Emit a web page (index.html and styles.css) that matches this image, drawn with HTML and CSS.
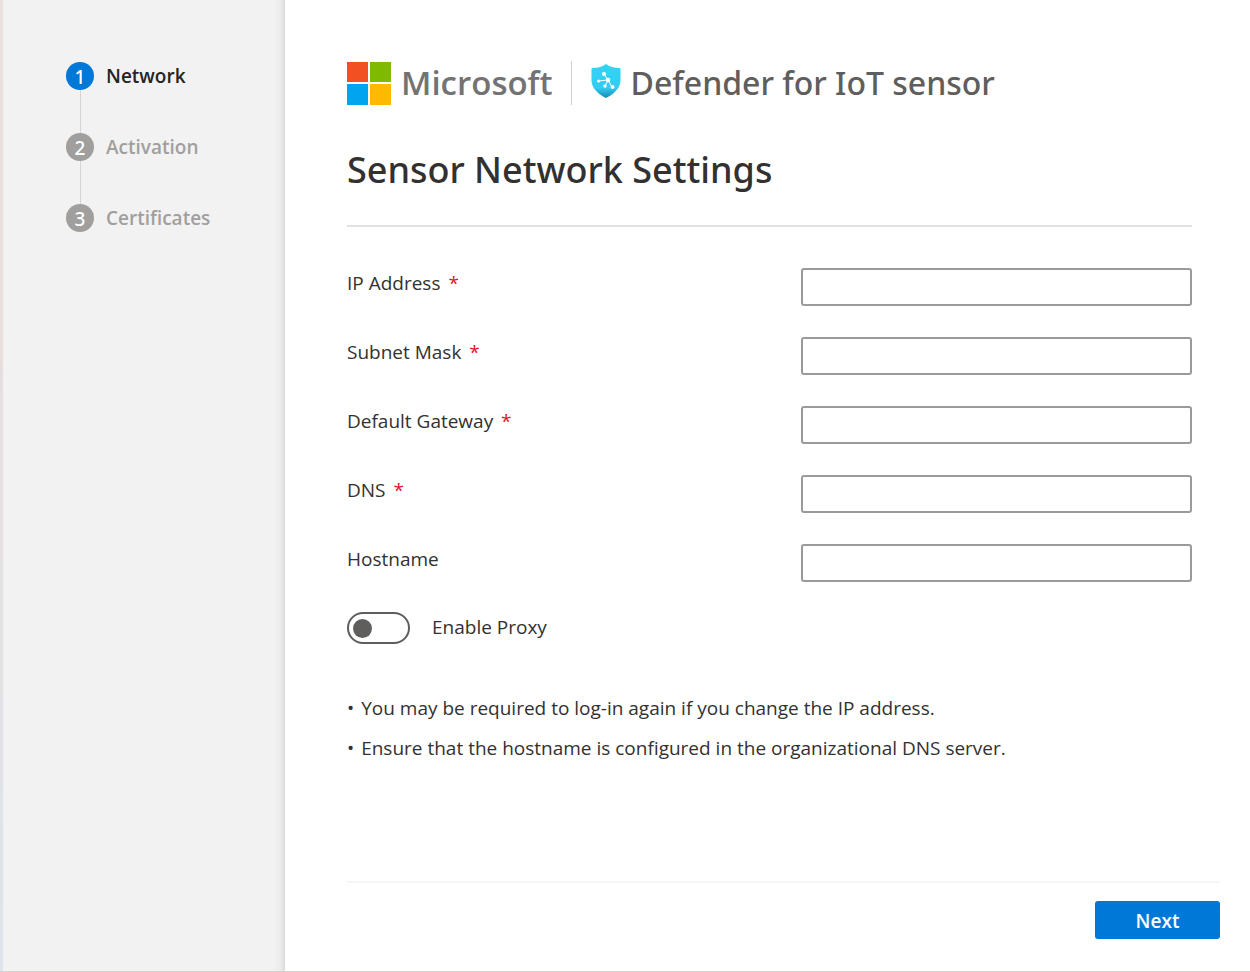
FILE: index.html
```html
<!DOCTYPE html>
<html lang="en">
<head>
<meta charset="utf-8">
<meta name="viewport" content="width=device-width, initial-scale=1">
<title>Defender for IoT sensor</title>
<link rel="stylesheet" href="styles.css">
</head>
<body>
<div class="wizard">
  <nav class="sidebar" aria-label="Setup steps">
    <ol class="steps">
      <li class="step step-active" aria-current="step"><span class="step-number">1</span><span class="step-name">Network</span></li>
      <li class="step"><span class="step-number">2</span><span class="step-name">Activation</span></li>
      <li class="step"><span class="step-number">3</span><span class="step-name">Certificates</span></li>
    </ol>
  </nav>
  <main class="main">
    <header class="brand">
      <svg class="brand-squares" viewBox="0 0 44 44" aria-hidden="true">
        <path fill="#f25022" d="M0 1h21v20H0z"/>
        <path fill="#7fba00" d="M23 1h21v20H23z"/>
        <path fill="#00a4ef" d="M0 23h21v21H0z"/>
        <path fill="#ffb900" d="M23 23h21v21H23z"/>
      </svg>
      <span class="brand-company">Microsoft</span>
      <span class="brand-divider"></span>
      <svg class="brand-shield" viewBox="0 0 30 36" aria-hidden="true">
        <defs>
          <linearGradient id="shield" x1="0" y1="0" x2="0" y2="1">
            <stop offset="0" stop-color="#32d4f5"/>
            <stop offset=".7" stop-color="#32cdf0"/>
            <stop offset="1" stop-color="#198ab3"/>
          </linearGradient>
        </defs>
        <path fill="url(#shield)" d="M15 1c3.500 2.800 8 4 13 4q1.500 0 1.500 1v11.500c0 8.500-8.500 14.500-14.500 17.500C9 32 .500 26 .500 17.500V6q0-1 1.500-1c5 0 9.500-1.200 13-4z"/>
        <path stroke="#fff" stroke-width="1" fill="none" d="M17 17 13 11M17 17 7 18M17 17l-3 6M17 17l4 7"/>
        <g fill="#fff"><circle cx="17" cy="17" r="2.300"/><circle cx="13" cy="11" r="2"/><circle cx="7.500" cy="18" r="1.500"/><circle cx="14" cy="23" r="1.700"/><circle cx="21.500" cy="24" r="2"/></g>
      </svg>
      <span class="brand-product">Defender for IoT sensor</span>
    </header>
    <form class="content">
      <h1 class="title">Sensor Network Settings</h1>
      <div class="fields">
        <div class="field"><label for="ip">IP Address <span class="required">*</span></label><input class="text-box" id="ip" type="text" required></div>
        <div class="field"><label for="mask">Subnet Mask <span class="required">*</span></label><input class="text-box" id="mask" type="text" required></div>
        <div class="field"><label for="gateway">Default Gateway <span class="required">*</span></label><input class="text-box" id="gateway" type="text" required></div>
        <div class="field"><label for="dns">DNS <span class="required">*</span></label><input class="text-box" id="dns" type="text" required></div>
        <div class="field"><label for="hostname">Hostname</label><input class="text-box" id="hostname" type="text"></div>
      </div>
      <div class="proxy">
        <input class="toggle" id="proxy" type="checkbox" role="switch">
        <label for="proxy">Enable Proxy</label>
      </div>
      <ul class="notes">
        <li>You may be required to log-in again if you change the IP address.</li>
        <li>Ensure that the hostname is configured in the organizational DNS server.</li>
      </ul>
    </form>
    <footer class="footer"><button class="next" type="button">Next</button></footer>
  </main>
</div>
</body>
</html>
```
FILE: styles.css
```css
* { box-sizing: border-box; }

body {
  margin: 0;
  font-family: "Open Sans", "Noto Sans", sans-serif;
  font-size: 19px;
  line-height: 28px;
  color: #323130;
  background: #fff;
}

.wizard {
  display: flex;
  min-height: 100vh;
  border-bottom: 1px solid #d4d4d2;
}

.sidebar {
  flex: 0 0 285px;
  padding: 62px 0 0 63px;
  border-left: 3px solid;
  border-image: linear-gradient(#ebe0de, #e8dedd 30%, #dde4ea) 1;
  background: linear-gradient(to left, #dcdcdc, #ececec 5px, #f2f2f2 11px);
}

.steps, .notes {
  margin: 0;
  padding: 0;
  list-style: none;
}

.step {
  display: flex;
  align-items: center;
  gap: 12px;
  height: 28px;
  font-weight: 600;
  line-height: 30px;
  color: #a19f9d;
}

.step + .step::before {
  content: "";
  position: absolute;
  width: 1px;
  height: 43px;
  margin: -71px 0 0 14px;
  background: #d6d5d4;
}

.step + .step { margin-top: 43px; }

.step-number {
  flex: 0 0 28px;
  height: 28px;
  border-radius: 50%;
  background: #a19f9d;
  color: #fff;
  font-family: "Noto Sans", sans-serif;
  font-weight: 500;
  text-align: center;
}

.step-active { color: #252423; }
.step-active .step-number { background: #0078d7; }

.main {
  flex: 1;
  display: flex;
  flex-direction: column;
  padding: 61px 30px 32px 62px;
}

.brand {
  display: flex;
  align-items: center;
  height: 44px;
  white-space: nowrap;
}

.brand-squares { width: 44px; height: 44px; }

.brand-company {
  margin-left: 10px;
  font-size: 33px;
  font-weight: 600;
  color: #737373;
}

.brand-divider {
  width: 1px;
  height: 44px;
  margin: 0 19px 0 18px;
  background: #d2d0ce;
}

.brand-shield { width: 30px; height: 36px; margin: 0 10px 4px 0; }

.brand-product {
  font-family: "Noto Sans", sans-serif;
  font-size: 32px;
  font-weight: 500;
  color: #605e5c;
}

.content {
  flex: 1;
  padding-right: 28px;
}

.title {
  margin: 0;
  padding: 40px 0 30px;
  border-bottom: 2px solid #e1e1e1;
  font-family: "Noto Sans", sans-serif;
  font-size: 36px;
  font-weight: 500;
  line-height: 50px;
  color: #323130;
}

.fields {
  display: grid;
  gap: 31px;
  padding-top: 41px;
}

.field {
  display: grid;
  grid-template-columns: 454px 1fr;
}

.field label { line-height: 30px; }

.required {
  margin-left: 3px;
  color: #e8112d;
}

.text-box {
  width: 100%;
  height: 38px;
  padding: 0 12px;
  border: 2px solid #9b9a99;
  border-radius: 3px;
  background: #fff;
  font: inherit;
}

.proxy {
  display: flex;
  align-items: flex-start;
  gap: 22px;
  margin-top: 30px;
  line-height: 30px;
}

.toggle {
  appearance: none;
  width: 63px;
  height: 32px;
  margin: 0;
  padding: 5px 4px;
  border: 2px solid #605e5c;
  border-radius: 16px;
}

.toggle::before {
  content: "";
  display: block;
  width: 19px;
  height: 19px;
  border-radius: 50%;
  background: #605e5c;
}

.toggle:checked::before { margin-left: auto; }

.notes {
  display: grid;
  gap: 12px;
  margin-top: 50px;
}

.notes li {
  display: flex;
  gap: 7px;
}

.notes li::before { content: "•"; }

.footer {
  display: flex;
  justify-content: flex-end;
  padding-top: 18px;
  border-top: 2px solid #f5f5f5;
}

.next {
  width: 125px;
  height: 38px;
  padding: 2px 0 0;
  border: 0;
  border-radius: 3px;
  background: #0078d7;
  color: #fff;
  font: inherit;
  font-weight: 600;
}
```
